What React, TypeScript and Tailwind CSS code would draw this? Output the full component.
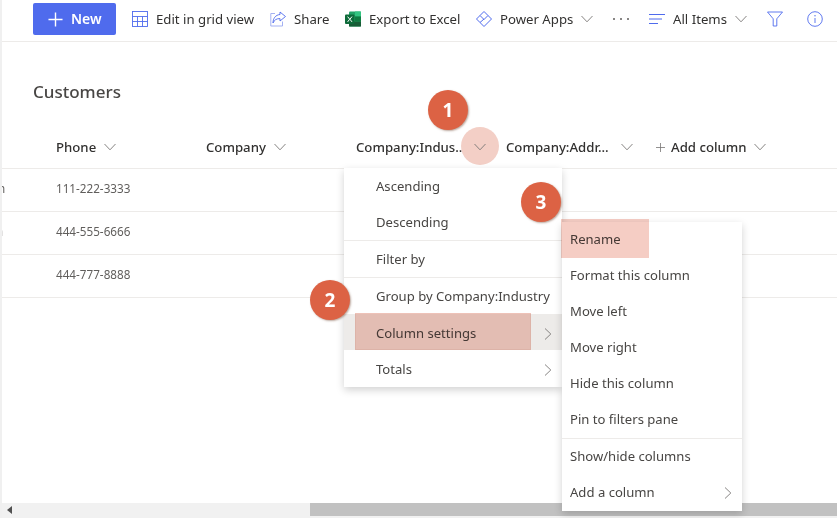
import React from "react";

const Chevron = ({ className = "" }: { className?: string }) => (
  <svg viewBox="0 0 12 8" className={`h-[8px] w-[12px] ${className}`} fill="none" stroke="#797775" strokeWidth="0.9">
    <path d="M0.5 1L6 6.8L11.5 1" />
  </svg>
);
const ChevronRight = ({ className = "" }: { className?: string }) => (
  <svg viewBox="0 0 8 12" className={`h-[12px] w-[8px] ${className}`} fill="none" stroke="#797775" strokeWidth="0.9">
    <path d="M1 0.5L6.8 6L1 11.5" />
  </svg>
);

const Tool = ({ icon, label, chevron, className }: { icon: React.ReactNode; label: string; chevron?: boolean; className: string }) => (
  <div className={`flex items-center ${className}`}>
    <div className="flex w-[16px] justify-center">{icon}</div>
    <span className="ml-[8px] whitespace-nowrap pt-[2px]">{label}</span>
    {chevron && <Chevron className="ml-auto" />}
  </div>
);

const blue = "#4f6bed";

const GridIcon = (
  <svg viewBox="0 0 16 16" className="h-[16px] w-[16px]" fill="none" stroke={blue} strokeWidth="0.9">
    <rect x="0.5" y="0.5" width="15" height="15" />
    <path d="M0.5 5.5H15.5M0.5 10.5H15.5M5.5 5.5V15.5M10.5 5.5V15.5" />
  </svg>
);
const ShareIcon = (
  <svg viewBox="0 0 16 16" className="h-[16px] w-[16px]" fill="none" stroke={blue} strokeWidth="0.9">
    <path d="M10 1L15.5 5.5L10 10V7.6C6.5 7.4 4.3 9 3 12C3 7.5 5.5 3.9 10 3.5Z" />
    <path d="M5 2.5H0.8V15H12.5V10.5" stroke="#9aa8f0" />
  </svg>
);
const ExcelIcon = (
  <svg viewBox="0 0 16 16" className="h-[16px] w-[16px]">
    <rect x="4" y="0.5" width="12" height="15" rx="1" fill="#21a366" />
    <rect x="10" y="0.5" width="6" height="5" fill="#33c481" />
    <rect x="4" y="10.5" width="12" height="5" fill="#185c37" />
    <rect x="10" y="5.5" width="6" height="5" fill="#107c41" />
    <rect x="0" y="3.5" width="9.5" height="9.5" rx="1" fill="#0e6b3a" />
    <path d="M2.6 5.6L4.7 8.2L2.6 10.9M7 5.6L4.9 8.2L7 10.9" stroke="#fff" strokeWidth="1" fill="none" />
  </svg>
);
const PowerAppsIcon = (
  <svg viewBox="0 0 16 16" className="h-[16px] w-[16px]" fill="none" stroke={blue} strokeWidth="1" strokeLinejoin="round">
    <path d="M8 0.5L12 4.5L8 8.5L4 4.5Z" />
    <path d="M4 4.5L0.5 8L4 11.5L8 8" />
    <path d="M12 4.5L15.5 8L8 15.5L4 11.5" />
  </svg>
);
const ListIcon = (
  <svg viewBox="0 0 16 12" className="h-[12px] w-[16px]" fill="none" stroke={blue} strokeWidth="1">
    <path d="M0 1.5H16M0 6H13M0 10.5H9" />
  </svg>
);
const FilterIcon = (
  <svg viewBox="0 0 16 16" className="h-[16px] w-[16px]" fill="none" stroke={blue} strokeWidth="0.9">
    <path d="M0.5 1H15.5L9.8 7.8V15H6.2V7.8Z" />
  </svg>
);
const InfoIcon = (
  <svg viewBox="0 0 16 16" className="h-[16px] w-[16px]" fill="none" stroke={blue} strokeWidth="0.9">
    <circle cx="8" cy="8" r="7.3" />
    <path d="M8 7V12" />
    <circle cx="8" cy="4.8" r="0.7" fill={blue} stroke="none" />
  </svg>
);

const Column = ({ label, chevronClass, w = "w-[150px]" }: { label: string; chevronClass: string; w?: string }) => (
  <div className={`flex items-center ${w}`}>
    <span className="whitespace-nowrap font-medium">{label}</span>
    <Chevron className={chevronClass} />
  </div>
);

const Row = ({ phone, edge, edgeClass }: { phone: string; edge: string; edgeClass: string }) => (
  <div className="flex h-[43px] items-center border-b border-[#edebe9] pb-[2px] text-[11.7px] text-[#605e5c]">
    <div className="w-[54px]">
      <span className={`block ${edgeClass}`}>{edge}</span>
    </div>
    <span>{phone}</span>
  </div>
);

const MenuItem = ({ label, chevron, className = "pt-[2px]" }: { label: string; chevron?: boolean; className?: string }) => (
  <div className={`flex h-[36px] items-center pl-[32px] pr-[10px] ${className}`}>
    <span className="whitespace-nowrap">{label}</span>
    {chevron && <ChevronRight className="ml-auto" />}
  </div>
);
const SubItem = ({ label, chevron }: { label: string; chevron?: boolean }) => (
  <div className="flex h-[36px] items-center pl-[8px] pr-[10px]">
    <span className="whitespace-nowrap">{label}</span>
    {chevron && <ChevronRight className="ml-auto" />}
  </div>
);
const Divider = () => <div className="h-px bg-[#edebe9]" />;

const Badge = ({ n, className }: { n: string; className: string }) => (
  <div
    className={`absolute flex h-[40px] w-[40px] items-center justify-center rounded-full bg-[#dc6244] text-[19px] font-bold text-white shadow-[1px_1px_2px_rgba(120,80,60,0.5)] ${className}`}
  >
    {n}
  </div>
);

export default function App() {
  return (
    <div className="relative flex h-[518px] w-[837px] flex-col overflow-hidden border-l-2 border-[#f0f0f0] bg-white font-['Noto_Sans','Open_Sans',sans-serif] text-[13.2px] text-[#323130]">
      {/* Command bar */}
      <div className="flex h-[42px] shrink-0 items-start border-b border-[#edebe9] pt-[3px]">
        <div className="ml-[31px] flex h-[32px] w-[83px] items-center rounded-[2px] bg-[#4f6bed] pl-[15px] font-semibold text-white">
          <svg viewBox="0 0 16 16" className="h-[15px] w-[15px]" fill="none" stroke="#fff" strokeWidth="1.5">
            <path d="M8 0.5V15.5M0.5 8H15.5" />
          </svg>
          <span className="ml-[8px] pb-[1px] text-[14px]">New</span>
        </div>
        <div className="flex h-[32px] items-center">
          <Tool className="ml-[16px] w-[138px]" icon={GridIcon} label="Edit in grid view" />
          <Tool className="w-[75px]" icon={ShareIcon} label="Share" />
          <Tool className="w-[131px]" icon={ExcelIcon} label="Export to Excel" />
          <Tool className="w-[117px]" icon={PowerAppsIcon} label="Power Apps" chevron />
          <div className="ml-[20px] flex w-[36px] gap-[5px]">
            <span className="h-[2px] w-[2px] rounded-full bg-[#605e5c]" />
            <span className="h-[2px] w-[2px] rounded-full bg-[#605e5c]" />
            <span className="h-[2px] w-[2px] rounded-full bg-[#605e5c]" />
          </div>
          <Tool className="w-[98px]" icon={ListIcon} label="All Items" chevron />
          <div className="ml-[20px]">{FilterIcon}</div>
          <div className="ml-[24px]">{InfoIcon}</div>
        </div>
      </div>

      {/* Title */}
      <div className="ml-[31px] mt-[36px] h-[28px] text-[17px] font-medium leading-[28px] text-[#484644]">Customers</div>

      {/* Table */}
      <div className="mt-[20px] flex h-[43px] shrink-0 items-center border-b border-[#edebe9] pl-[54px] pt-[1px]">
        <Column label="Phone" chevronClass="ml-[8px]" />
        <Column label="Company" chevronClass="ml-[8px]" />
        <Column label="Company:Indus..." chevronClass="ml-[12px]" />
        <Column label="Company:Addr..." chevronClass="ml-[12px]" w="w-[150px]" />
        <div className="flex items-center">
          <svg viewBox="0 0 10 10" className="h-[9px] w-[9px]" fill="none" stroke="#797775" strokeWidth="0.9">
            <path d="M5 0V10M0 5H10" />
          </svg>
          <span className="ml-[6px] font-medium">Add column</span>
          <Chevron className="ml-[7px]" />
        </div>
      </div>
      <Row phone="111-222-3333" edge="n" edgeClass="-ml-[4px]" />
      <Row phone="444-555-6666" edge="n" edgeClass="-ml-[6px] opacity-60" />
      <Row phone="444-777-8888" edge="" edgeClass="" />

      {/* Scrollbar */}
      <div className="mt-auto flex h-[15px] items-start bg-[#f1f1f1]">
        <div className="ml-[5px] mt-[3px] h-0 w-0 border-y-[4px] border-r-[5px] border-y-transparent border-r-[#505050]" />
        <div className="ml-[298px] h-[13px] flex-1 bg-[#c1c1c1]" />
      </div>

      {/* Highlighted chevron */}
      <div className="absolute left-[459px] top-[127px] flex h-[38px] w-[38px] items-center justify-center rounded-full bg-[#f3cfc6] pt-[2px]">
        <Chevron />
      </div>

      {/* Menu */}
      <div className="absolute left-[342px] top-[168px] w-[218px] bg-white pb-[1px] text-[13.1px] text-[#484644] shadow-[0_3px_8px_rgba(0,0,0,0.18)]">
        <MenuItem label="Ascending" />
        <MenuItem label="Descending" />
        <Divider />
        <MenuItem label="Filter by" />
        <Divider />
        <MenuItem label="Group by Company:Industry" />
        <MenuItem label="Column settings" chevron className="bg-[#edebe9] pt-[4px]" />
        <MenuItem label="Totals" chevron className="pt-[4px]" />
      </div>

      {/* Column settings highlight */}
      <div className="absolute left-[353px] top-[313px] h-[37px] w-[176px] border border-[#eec2b8] bg-[#f5cdc4] mix-blend-multiply" />

      {/* Submenu */}
      <div className="absolute left-[560px] top-[222px] w-[180px] bg-white text-[13.1px] text-[#484644] shadow-[0_3px_8px_rgba(0,0,0,0.18)]">
        <SubItem label="Rename" />
        <SubItem label="Format this column" />
        <SubItem label="Move left" />
        <SubItem label="Move right" />
        <SubItem label="Hide this column" />
        <SubItem label="Pin to filters pane" />
        <Divider />
        <SubItem label="Show/hide columns" />
        <SubItem label="Add a column" chevron />
      </div>

      {/* Rename highlight */}
      <div className="absolute left-[559px] top-[219px] h-[39px] w-[88px] bg-[#f5cdc4] mix-blend-multiply" />

      <Badge n="1" className="left-[426px] top-[90px]" />
      <Badge n="3" className="left-[519px] top-[182px]" />
      <Badge n="2" className="left-[308px] top-[280px]" />
    </div>
  );
}
